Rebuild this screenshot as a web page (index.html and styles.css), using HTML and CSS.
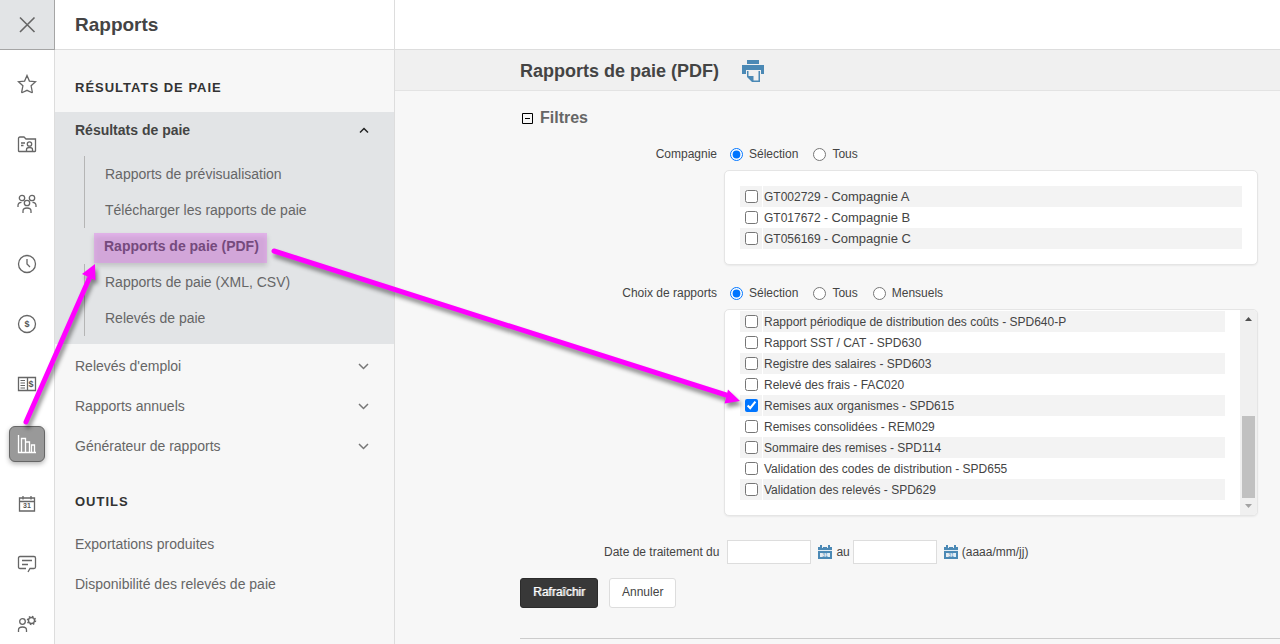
FILE: index.html
```
<!DOCTYPE html>
<html lang="fr">
  <head>
    <meta charset="utf-8">
    <meta name="viewport" content="width=device-width, initial-scale=1">
    <title>Rapports de paie (PDF)</title>
    <link rel="stylesheet" href="styles.css">
  </head>

  <body>
    <div class="app">
      <!-- Icon rail -->
      <nav class="rail" aria-label="Modules">
        <button class="rail-close" aria-label="Fermer">
          <svg width="18" height="18" viewBox="0 0 18 18"><path d="M2 1.500l14.500 14.500M16.500 1.500L2 16" stroke-width="1.600"/></svg>
        </button>
        <a href="#" class="rail-item" aria-label="Favoris">
          <svg width="20" height="20" viewBox="0 0 20 20"><path d="M10 1.500l2.400 5.600 6.100.6-4.400 4.100 1.200 6.200c.1.5-.3.7-.7.5L10 16.300l-4.600 2.200c-.4.2-.8 0-.7-.5l1.200-6.200L1.500 7.700l6.100-.6z"/></svg>
        </a>
        <a href="#" class="rail-item" aria-label="Dossiers">
          <svg width="20" height="20" viewBox="0 0 20 20"><path d="M1.500 17V4.500q0-1.500 1.500-1.500h4l2 2h9.500v12q0 .5-.5.500H2q-.5 0-.5-.5zM4 9h4M4 11.500h2.500"/><circle cx="12.500" cy="10" r="2.200"/><path d="M9.500 17v-1.500q0-2 3-2t3 2V17"/></svg>
        </a>
        <a href="#" class="rail-item" aria-label="Employés">
          <svg width="20" height="20" viewBox="0 0 20 20"><circle cx="5" cy="4" r="2.700"/><circle cx="15" cy="4" r="2.700"/><circle cx="10" cy="9" r="2.700"/><path d="M1 13v-1.500q0-3 3.500-3.200M19 13v-1.500q0-3-3.500-3.200M6 19v-2q0-3 4-3t4 3v2"/></svg>
        </a>
        <a href="#" class="rail-item" aria-label="Temps">
          <svg width="20" height="20" viewBox="0 0 20 20"><circle cx="10" cy="10" r="8.500"/><path d="M10 5v5l3 3"/></svg>
        </a>
        <a href="#" class="rail-item" aria-label="Paie">
          <svg width="20" height="20" viewBox="0 0 20 20"><circle cx="10" cy="10" r="8.500"/><text x="10" y="13" class="glyph">$</text></svg>
        </a>
        <a href="#" class="rail-item" aria-label="Relevés">
          <svg width="20" height="20" viewBox="0 0 20 20"><path d="M1.500 3.500h17v13h-17zM10.500 3.500v13"/><path d="M3.500 6.500H8M3.500 9H8M3.500 11.500H8M3.500 14H8" stroke-width="1"/><text x="14" y="13" class="glyph">$</text></svg>
        </a>
        <a href="#" class="rail-item active" aria-label="Rapports">
          <svg width="20" height="20" viewBox="0 0 20 20"><path d="M1.500 1v17.500H19M4.500 18V4.500h4V18M12.500 18.500V8h-4M14.500 18v-7h3v7"/></svg>
        </a>
        <a href="#" class="rail-item" aria-label="Calendrier">
          <svg width="20" height="20" viewBox="0 0 20 20"><path d="M2.500 4h15v13h-15zM2.500 7.500h15M6 2v3.500M14 2v3.500"/><text x="10" y="14" class="glyph small">31</text></svg>
        </a>
        <a href="#" class="rail-item" aria-label="Messages">
          <svg width="20" height="20" viewBox="0 0 20 20"><path d="M9 14.500H3q-1.500 0-1.500-1.500V4q0-1.500 1.500-1.500h14q1.500 0 1.500 1.500v9q0 1.500-1.500 1.500h-4L11 18M5 6.500h10M5 10.500h6"/></svg>
        </a>
        <a href="#" class="rail-item" aria-label="Administration">
          <svg width="20" height="20" viewBox="0 0 20 20"><circle cx="5.500" cy="7.500" r="2.800"/><path d="M1.500 18v-2q0-3 4-3t4 3v2"/><circle cx="14.500" cy="6.500" r="3"/><circle cx="14.500" cy="6.500" r="4" stroke-width="1.500" stroke-dasharray="1.500 1.640"/></svg>
        </a>
      </nav>

      <!-- Section menu -->
      <aside class="menu">
        <h1 class="menu-title">Rapports</h1>
        <h2 class="menu-heading">RÉSULTATS DE PAIE</h2>
        <div class="menu-group">
          <button class="menu-item open">Résultats de paie
            <svg width="10" height="10" viewBox="0 0 10 10"><path d="M1 7.500l4-4 4 4"/></svg>
          </button>
          <ul class="submenu">
            <li><a href="#">Rapports de prévisualisation</a></li>
            <li><a href="#">Télécharger les rapports de paie</a></li>
            <li class="current"><a href="#">Rapports de paie (PDF)</a></li>
            <li><a href="#">Rapports de paie (XML, CSV)</a></li>
            <li><a href="#">Relevés de paie</a></li>
          </ul>
        </div>
        <div class="menu-closed">
          <button class="menu-item">Relevés d'emploi
            <svg width="11" height="10" viewBox="0 0 11 10"><path d="M1 3l4.500 4.500L10 3"/></svg>
          </button>
          <button class="menu-item">Rapports annuels
            <svg width="11" height="10" viewBox="0 0 11 10"><path d="M1 3l4.500 4.500L10 3"/></svg>
          </button>
          <button class="menu-item">Générateur de rapports
            <svg width="11" height="10" viewBox="0 0 11 10"><path d="M1 3l4.500 4.500L10 3"/></svg>
          </button>
        </div>
        <h2 class="menu-heading tools">OUTILS</h2>
        <a href="#" class="menu-item">Exportations produites</a>
        <a href="#" class="menu-item">Disponibilité des relevés de paie</a>
      </aside>

      <main class="main">
        <div class="topbar"></div>
        <header class="page-head">
          <h1>Rapports de paie (PDF)</h1>
          <button class="print" aria-label="Imprimer">
            <svg width="22" height="22" viewBox="0 0 22 22"><path d="M5 0h12v4H5zM0 5h22v9H0z"/><path d="M4 10h15v5H4z" fill="#f0f0f0"/><path d="M5 11h13v11h-8l-5-5z"/><path d="M6.500 11h10v9.500h-5V16h-5z" fill="#f0f0f0"/></svg>
          </button>
        </header>

        <form class="filters">
          <h2 class="filters-title">
            <svg width="11" height="11" viewBox="0 0 11 11"><path d="M.5.5h10v10H.5zM3 5.500h5"/></svg>
            Filtres
          </h2>

          <div class="field">
            <span class="field-label">Compagnie</span>
            <div class="radios">
              <label><input type="radio" name="compagnie" checked>Sélection</label>
              <label><input type="radio" name="compagnie">Tous</label>
            </div>
            <div class="panel companies">
              <table>
                <tr><td><input type="checkbox" id="c1"></td><td><label for="c1">GT002729 - <span>Compagnie A</span></label></td></tr>
                <tr><td><input type="checkbox" id="c2"></td><td><label for="c2">GT017672 - <span>Compagnie B</span></label></td></tr>
                <tr><td><input type="checkbox" id="c3"></td><td><label for="c3">GT056169 - <span>Compagnie C</span></label></td></tr>
              </table>
            </div>
          </div>

          <div class="field">
            <span class="field-label">Choix de rapports</span>
            <div class="radios">
              <label><input type="radio" name="rapports" checked>Sélection</label>
              <label><input type="radio" name="rapports">Tous</label>
              <label><input type="radio" name="rapports">Mensuels</label>
            </div>
            <div class="panel reports">
              <table>
                <tr><td><input type="checkbox" id="r1"></td><td><label for="r1">Rapport périodique de distribution des coûts - SPD640-P</label></td></tr>
                <tr><td><input type="checkbox" id="r2"></td><td><label for="r2">Rapport SST / CAT - SPD630</label></td></tr>
                <tr><td><input type="checkbox" id="r3"></td><td><label for="r3">Registre des salaires - SPD603</label></td></tr>
                <tr><td><input type="checkbox" id="r4"></td><td><label for="r4">Relevé des frais - FAC020</label></td></tr>
                <tr><td><input type="checkbox" id="r5" checked></td><td><label for="r5">Remises aux organismes - SPD615</label></td></tr>
                <tr><td><input type="checkbox" id="r6"></td><td><label for="r6">Remises consolidées - REM029</label></td></tr>
                <tr><td><input type="checkbox" id="r7"></td><td><label for="r7">Sommaire des remises - SPD114</label></td></tr>
                <tr><td><input type="checkbox" id="r8"></td><td><label for="r8">Validation des codes de distribution - SPD655</label></td></tr>
                <tr><td><input type="checkbox" id="r9"></td><td><label for="r9">Validation des relevés - SPD629</label></td></tr>
              </table>
              <div class="scrollbar">
                <svg width="7" height="4" viewBox="0 0 7 4"><path d="M0 4l3.500-4L7 4z" fill="#505050"/></svg>
                <div class="thumb"></div>
                <svg width="7" height="4" viewBox="0 0 7 4"><path d="M0 0l3.500 4L7 0z" fill="#a3a3a3"/></svg>
              </div>
            </div>
          </div>

          <div class="dates">
            <label for="du">Date de traitement du</label>
            <input type="text" id="du">
            <button type="button" class="cal" aria-label="Choisir la date de début">
              <svg width="14" height="14" viewBox="0 0 14 14"><path d="M0 2h14v4H0zM2 0h2v3H2zM10 0h2v3h-2zM0 6h14v8H0z" fill="#4b89b5"/><path d="M0 5h14v1H0zM2 8h10v4H2zM4 2h1v1H4zM9 2h1v1H9z" fill="#e4edf4"/><text x="7" y="12" class="cal-num">31</text></svg>
            </button>
            <label for="au">au</label>
            <input type="text" id="au">
            <button type="button" class="cal" aria-label="Choisir la date de fin">
              <svg width="14" height="14" viewBox="0 0 14 14"><path d="M0 2h14v4H0zM2 0h2v3H2zM10 0h2v3h-2zM0 6h14v8H0z" fill="#4b89b5"/><path d="M0 5h14v1H0zM2 8h10v4H2zM4 2h1v1H4zM9 2h1v1H9z" fill="#e4edf4"/><text x="7" y="12" class="cal-num">31</text></svg>
            </button>
            <span>(aaaa/mm/jj)</span>
          </div>

          <div class="actions">
            <button type="button" class="btn primary">Rafraîchir</button>
            <button type="button" class="btn">Annuler</button>
          </div>
          <hr>
        </form>
      </main>

      <!-- Guide arrows -->
      <svg class="arrows" width="760" height="460" viewBox="0 0 760 460">
        <path d="M26 422L89 279M274 251L726 395"/>
        <path class="head" d="M95 264l.5 16.500L82 274zM740 401l-15.500 2.500 3.500-14z"/>
      </svg>
    </div>
  </body>
</html>
```
FILE: styles.css
```
* {
  box-sizing: border-box;
}

body {
  margin: 0;
  font-family: "Liberation Sans", Arial, sans-serif;
  font-size: 12px;
  color: #444;
  background-color: #f7f7f7;
}

h1, h2, ul {
  margin: 0;
  padding: 0;
}

button {
  font-family: inherit;
  cursor: pointer;
}

a {
  color: inherit;
  text-decoration: none;
}

.app {
  position: relative;
  display: flex;
  height: 100vh;
  overflow: hidden;
}

/* Icon rail */
.rail {
  display: flex;
  flex-direction: column;
  align-items: center;
  gap: 24px;
  flex: 0 0 55px;
  background-color: #fff;
  border-right: 1px solid #ddd;
}

.rail svg {
  fill: none;
  stroke: #666;
  stroke-width: 1.3;
}

.rail-close {
  flex: none;
  width: 55px;
  height: 50px;
  margin: 0 -1px -8px 0;
  padding: 0;
  border: 0;
  border-right: 1px solid #a5a5a5;
  border-bottom: 1px solid #a5a5a5;
  background-color: #e2e4e6;
}

.rail-close svg {
  display: block;
  margin: 0 auto;
}

.rail-item {
  display: flex;
  flex: none;
  align-items: center;
  justify-content: center;
  width: 36px;
  height: 36px;
}

.rail-item.active {
  border: 1px solid #666;
  border-radius: 6px;
  background-color: #999;
  box-shadow: 0 2px 5px rgba(0, 0, 0, 0.3);
}

.rail-item.active svg {
  stroke: #fff;
}

.rail svg .glyph {
  fill: #555;
  stroke: none;
  font-size: 9px;
  font-weight: bold;
  text-anchor: middle;
}

.rail svg .small {
  font-size: 7px;
}

/* Section menu */
.menu {
  flex: 0 0 340px;
  border-right: 1px solid #ddd;
  font-size: 14px;
  color: #666;
}

.menu-title {
  height: 50px;
  padding-left: 20px;
  border-bottom: 1px solid #ddd;
  background-color: #fff;
  font-size: 19px;
  line-height: 50px;
  color: #444;
}

.menu-heading {
  padding: 28px 20px 14px;
  font-size: 13px;
  line-height: 20px;
  letter-spacing: 1px;
  color: #333;
}

.menu-heading.tools {
  padding: 26px 20px 12px;
}

.menu-group {
  padding-bottom: 8px;
  background-color: #e2e4e6;
}

.menu-item {
  display: flex;
  align-items: center;
  justify-content: space-between;
  width: 100%;
  height: 40px;
  padding: 0 25px 0 20px;
  border: 0;
  background: none;
  font-size: 14px;
  color: #666;
}

.menu-item svg {
  fill: none;
  stroke: #777;
  stroke-width: 1.5;
}

.menu-item.open {
  height: 36px;
  font-weight: bold;
  color: #444;
}

.menu-item.open svg {
  stroke: #222;
}

.menu-closed {
  padding: 2px 0 0;
}

.submenu {
  padding: 8px 0 0 29px;
  list-style: none;
}

.submenu li {
  height: 36px;
  padding-left: 20px;
  border-left: 1px solid #b5b5b5;
  line-height: 36px;
}

.submenu .current {
  display: flex;
  align-items: flex-end;
  padding: 0 0 1px 9px;
  border-left-color: transparent;
}

.submenu .current a {
  padding: 0 8px 4px 10px;
  background-color: #d2a6d9;
  box-shadow: inset 0 3px 5px #e2b5ea, 0 3px 5px rgba(0, 0, 0, 0.15);
  font-weight: bold;
  line-height: 26px;
  color: #754a7d;
}

/* Page */
.main {
  flex: 1;
  min-width: 0;
}

.topbar {
  height: 50px;
  border-bottom: 1px solid #ddd;
  background-color: #fff;
}

.page-head {
  display: flex;
  align-items: center;
  gap: 23px;
  height: 41px;
  padding: 2px 0 0 125px;
  border-bottom: 1px solid #e3e3e3;
  background-color: #f0f0f0;
}

.page-head h1 {
  font-size: 18px;
}

.print {
  padding: 0;
  border: 0;
  background: none;
}

.print svg {
  display: block;
  fill: #4b89b5;
}

.filters {
  padding: 16px 22px 0 125px;
}

.filters-title {
  display: flex;
  align-items: center;
  gap: 7px;
  padding-left: 2px;
  margin-bottom: 15px;
  font-size: 16px;
  line-height: 22px;
  color: #666;
}

.filters-title svg {
  fill: none;
  stroke: #000;
}

.field {
  display: grid;
  grid-template-columns: 197px 1fr;
  column-gap: 7px;
  margin-bottom: 18px;
}

.field-label {
  line-height: 20px;
  text-align: right;
}

.radios {
  display: flex;
  gap: 15px;
  height: 26px;
  padding-left: 6px;
}

.radios label {
  display: flex;
  align-items: center;
  gap: 6px;
  height: 20px;
}

input[type="radio"],
input[type="checkbox"] {
  width: 13px;
  height: 13px;
  margin: 0;
}

/* Lists of tick boxes */
.panel {
  grid-column: 2;
  display: flex;
  border: 1px solid #e5e5e5;
  border-radius: 5px;
  background-color: #fff;
  box-shadow: 0 1px 2px rgba(0, 0, 0, 0.06);
  overflow: hidden;
}

.panel table {
  flex: 1;
  border-spacing: 0;
}

.panel tr {
  height: 21px;
}

.panel td {
  padding: 0 1px;
}

.panel td:first-child {
  width: 23px;
  padding-left: 5px;
  border-right: 1px solid #fff;
}

.panel input {
  display: block;
}

.panel tr:nth-child(odd) {
  background-color: #f3f3f3;
}

.companies {
  padding: 15px;
}

.companies span {
  font-size: 13px;
}

.reports {
  padding-left: 15px;
}

.reports table {
  margin: 1px 15px 15px 0;
}

.scrollbar {
  display: flex;
  flex-direction: column;
  align-items: center;
  width: 17px;
  padding: 7px 0;
  background-color: #f0f0f0;
}

.thumb {
  width: 13px;
  height: 82px;
  margin: auto 0 6px;
  background-color: #c1c1c1;
}

/* Date range */
.dates {
  display: flex;
  align-items: center;
  padding: 6px 0 0 84px;
}

.dates input {
  width: 84px;
  height: 24px;
  margin: 0 7px 0 3px;
  border: 1px solid #ddd;
  background-color: #fff;
}

.dates label:first-child {
  margin-right: 5px;
}

.cal {
  margin-right: 4px;
  padding: 0;
  border: 0;
  background: none;
}

.cal svg {
  display: block;
}

.cal-num {
  fill: #4b89b5;
  font-size: 5px;
  text-anchor: middle;
}

.actions {
  display: flex;
  gap: 11px;
  margin: 14px 0 30px;
}

.btn {
  height: 30px;
  padding: 0 12px 2px;
  border: 1px solid #ddd;
  border-radius: 3px;
  background-color: #fff;
  font-size: 12px;
  color: #444;
}

.btn.primary {
  border-color: #2b2b2b;
  background-color: #383838;
  color: #fff;
  text-shadow: 1px 0 0 rgba(255, 255, 255, 0.6);
}

hr {
  margin: 0 -22px 0 0;
  border: 0;
  border-top: 1px solid #ccc;
}

/* Guide arrows */
.arrows {
  position: absolute;
  top: 0;
  left: 0;
  fill: none;
  stroke: #f0f;
  stroke-width: 5;
  stroke-linecap: round;
  filter: drop-shadow(2px 4px 2px rgba(0, 0, 0, 0.45));
  pointer-events: none;
}

.arrows .head {
  fill: #f0f;
  stroke: none;
}
```
